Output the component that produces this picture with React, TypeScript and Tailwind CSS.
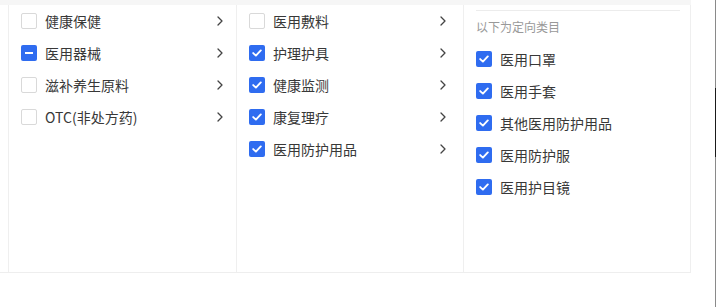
import React from "react";

type Item = { label: string; state: "on" | "off" | "half"; arrow?: boolean };

const col1: Item[] = [
  { label: "健康保健", state: "off", arrow: true },
  { label: "医用器械", state: "half", arrow: true },
  { label: "滋补养生原料", state: "off", arrow: true },
  { label: "OTC(非处方药)", state: "off", arrow: true },
];

const col2: Item[] = [
  { label: "医用敷料", state: "off", arrow: true },
  { label: "护理护具", state: "on", arrow: true },
  { label: "健康监测", state: "on", arrow: true },
  { label: "康复理疗", state: "on", arrow: true },
  { label: "医用防护用品", state: "on", arrow: true },
];

const col3: Item[] = [
  { label: "医用口罩", state: "on" },
  { label: "医用手套", state: "on" },
  { label: "其他医用防护用品", state: "on" },
  { label: "医用防护服", state: "on" },
  { label: "医用护目镜", state: "on" },
];

function Box({ state }: { state: Item["state"] }) {
  if (state === "off") {
    return <span className="w-4 h-4 shrink-0 rounded-[2px] border border-[#d9d9d9] bg-white" />;
  }
  return (
    <span className="w-4 h-4 shrink-0 rounded-[2px] bg-[#2f6cf0] flex items-center justify-center">
      {state === "on" ? (
        <svg width="10" height="8" viewBox="0 0 10 8" fill="none">
          <path d="M1.2 4.1L3.9 6.6L8.8 1.4" stroke="white" strokeWidth="1.9" strokeLinecap="round" strokeLinejoin="round" />
        </svg>
      ) : (
        <span className="w-2 h-[2px] bg-white" />
      )}
    </span>
  );
}

function Row({ item }: { item: Item }) {
  return (
    <div className="h-8 flex items-center gap-2 cursor-pointer">
      <Box state={item.state} />
      <span className="flex-1 text-sm text-[#383838]">{item.label}</span>
      {item.arrow && (
        <svg width="6" height="10" viewBox="0 0 6 10" fill="none" className="mr-[1px]">
          <path d="M1 1L5 5L1 9" stroke="#444" strokeWidth="1.3" strokeLinecap="round" strokeLinejoin="round" />
        </svg>
      )}
    </div>
  );
}

export default function App() {
  return (
    <div
      className="w-[716px] h-[307px] bg-white relative"
      style={{ fontFamily: '"Microsoft YaHei", "Noto Sans CJK SC", "Liberation Sans", sans-serif' }}
    >
      <div className="w-[691px] border-b border-[#eeeeee]">
        <div className="h-[5px] bg-[#f6f6f6]" />
        <div className="flex h-[267px] pl-[8px]">
          <div className="w-[228px] border-l border-[#efefef] pl-3 pr-3">
            {col1.map((it) => (
              <Row key={it.label} item={it} />
            ))}
          </div>
          <div className="w-[227px] border-l border-[#efefef] pl-3 pr-[16px]">
            {col2.map((it) => (
              <Row key={it.label} item={it} />
            ))}
          </div>
          <div className="flex-1 border-x border-[#efefef] pl-3 pr-[10px]">
            <div className="mt-[5px] border-t border-[#ececec]" />
            <div className="h-[32px] flex items-center text-xs text-[#999]">以下为定向类目</div>
            {col3.map((it) => (
              <Row key={it.label} item={it} />
            ))}
          </div>
        </div>
      </div>
      {/* scrollbar edge */}
      <div className="absolute right-0 top-0 h-full w-[1px] bg-[#8a8a8a]" />
      <div className="absolute right-0 top-[88px] h-[69px] w-[1px] bg-[#1a1a1a]" />
    </div>
  );
}
